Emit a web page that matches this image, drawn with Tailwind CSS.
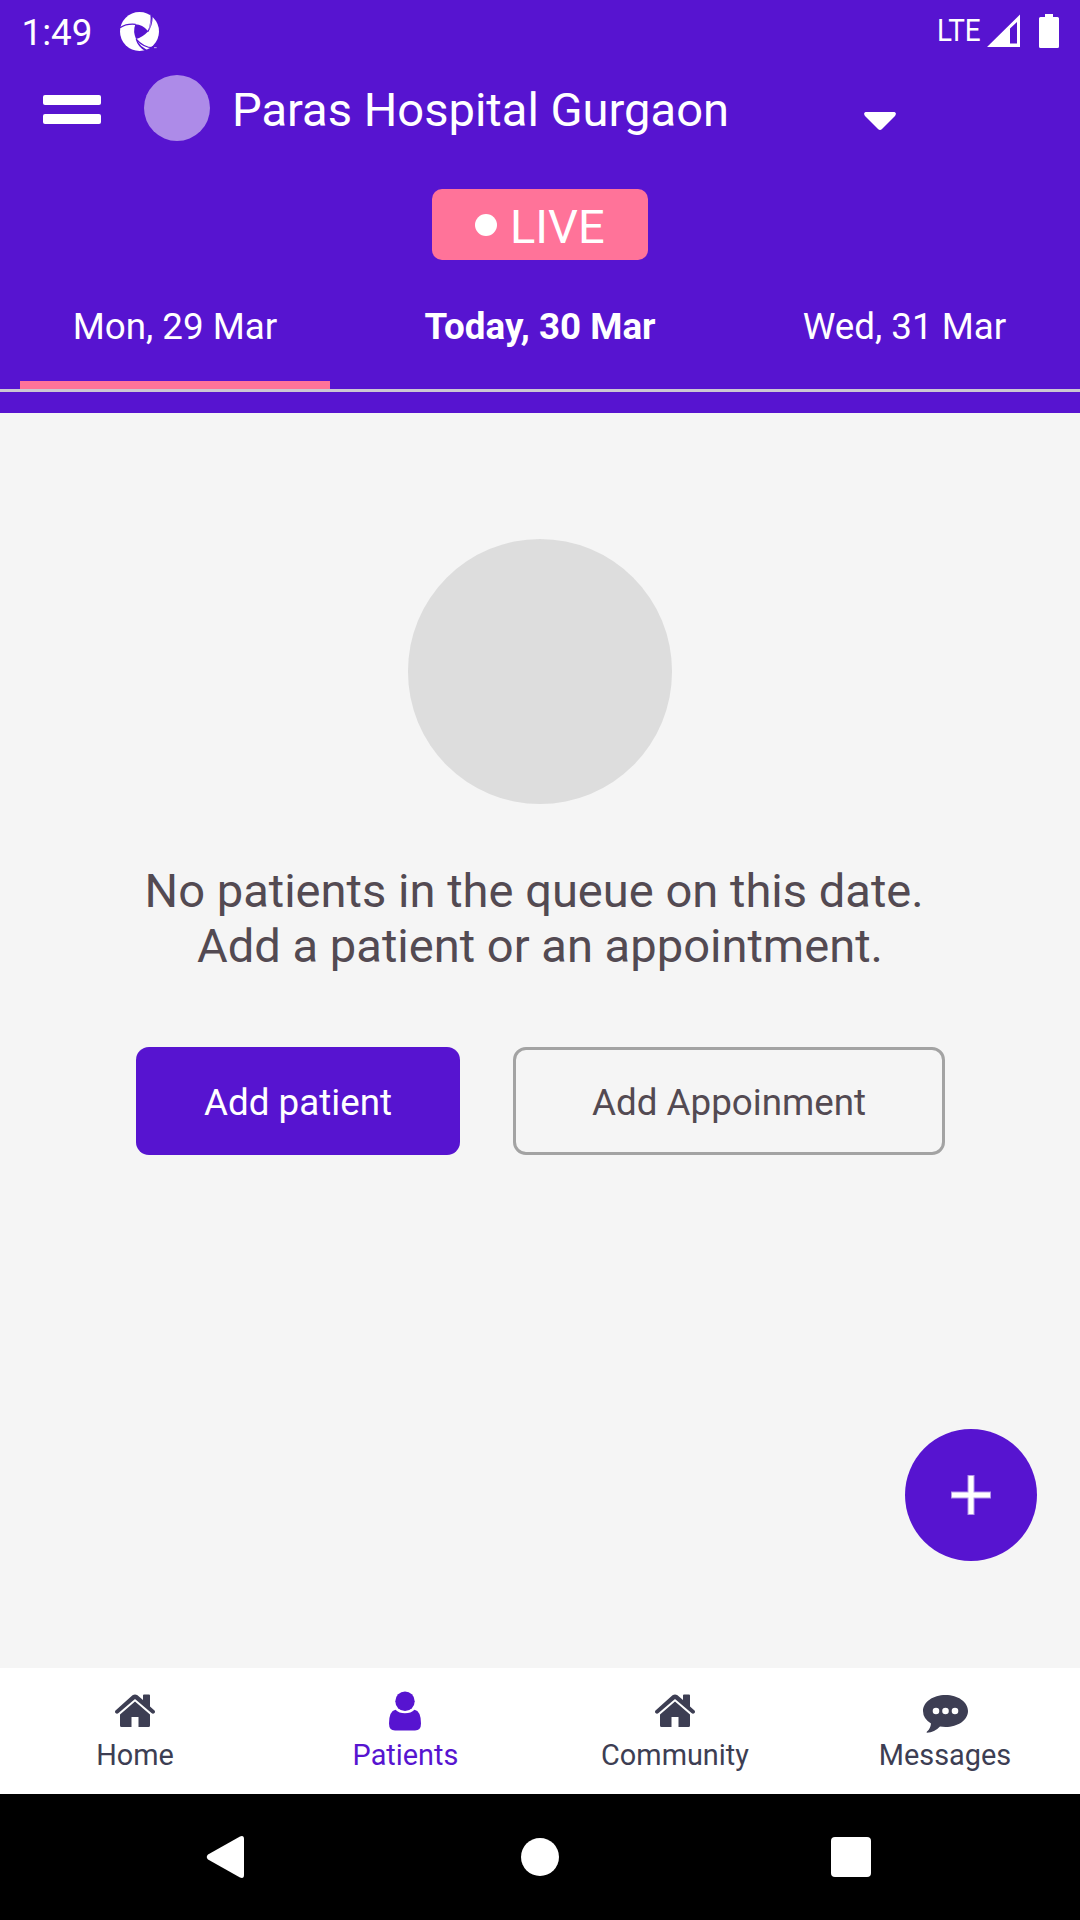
<!DOCTYPE html>
<html lang="en">
<head>
<meta charset="utf-8">
<title>Patients</title>
<script src="https://cdn.jsdelivr.net/npm/@tailwindcss/browser@4"></script>
</head>
<body class="bg-[#f5f5f5]">
<div class="relative flex h-[1920px] w-[1080px] flex-col overflow-hidden bg-[#f5f5f5] font-['Roboto',sans-serif] text-[36.75px] text-white">

  <header class="h-[413px] shrink-0 bg-[#5714d0]">
    <!-- Status bar -->
    <div class="flex h-[63px] justify-between pl-[21.5px] pr-[19px]">
      <div class="flex">
        <span class="w-[98.5px] leading-[66px]">1:49</span>
        <svg class="mt-3 h-[39px] w-[39px]" viewBox="0 0 117 117">
          <circle cx="58.500" cy="58.500" r="58.500" fill="#fff"/>
          <path d="M46 37Q38 59 48 81Q67 77 85 58Q67 37 46 37Z" fill="#5714d0"/>
          <path d="M0 47Q20 34 47 37" fill="none" stroke="#5714d0" stroke-width="3.500"/>
          <path d="M89 0L98 14Q98 38 85 60L83 58Q95 32 89 0Z" fill="#5714d0"/>
          <path d="M90 8Q96 28 89 50" fill="none" stroke="#fff" stroke-width="1.500"/>
          <path d="M47 82Q54 106 76 117H84L78 112Q62 104 52 88Q70 108 98 109L105 105Q74 108 50 80Z" fill="#5714d0"/>
          <path d="M102 107h8" stroke="#fff" stroke-width="2"/>
        </svg>
      </div>
      <div class="flex">
        <span class="w-[50px] origin-left scale-x-[.87] text-[32px] leading-[61px]">LTE</span>
        <svg class="mt-3.5 h-[34px] w-[74px]" viewBox="0 0 74 34" fill="#fff">
          <path fill-rule="evenodd" d="M0 33L33 .500V33ZM23 14.500V29.500H30V8Z"/>
          <path d="M58 0h8v3h4.500q1.500 0 1.500 1.500v28q0 1.500-1.500 1.500h-17q-1.500 0-1.500-1.500v-28q0-1.500 1.500-1.500H58Z"/>
        </svg>
      </div>
    </div>

    <!-- Clinic selector -->
    <div class="flex h-[90px] items-center pl-[43px]">
      <div class="mt-[3px] flex w-[101px] flex-col gap-[9px]">
        <div class="h-2.5 w-[58px] rounded-[2px] bg-white"></div>
        <div class="h-2.5 w-[58px] rounded-[2px] bg-white"></div>
      </div>
      <div class="h-[66px] w-[66px] rounded-full bg-[#ad8be8]"></div>
      <div class="ml-[22px] w-[632px] whitespace-nowrap pt-[3px] text-[47.1px] leading-[55px]">Paras Hospital Gurgaon</div>
      <svg class="mt-[26px] h-[18px] w-8" viewBox="0 0 32 18" fill="#fff"><path d="M1.500 0h29Q33 1 31 4L18 17Q16 19 14 17L1 4Q-1 1 1.500 0Z"/></svg>
    </div>

    <div class="mx-auto mt-9 flex h-[71px] w-[216px] items-center rounded-[10px] bg-[#ff7399] pl-[43px]">
      <div class="h-[22px] w-[22px] rounded-full bg-white"></div>
      <span class="ml-[13px] pt-1 text-[47px] leading-[55px]">LIVE</span>
    </div>

    <!-- Date tabs -->
    <div class="grid h-[132px] grid-cols-3 gap-[55px] border-b-3 border-[#ccc8d2] px-5 text-center leading-[125px]">
      <div class="h-[129px] border-b-8 border-[#ff7399] pt-1 whitespace-nowrap">Mon, 29 Mar</div>
      <div class="pt-1 font-bold whitespace-nowrap">Today, 30 Mar</div>
      <div class="pt-1 pr-px whitespace-nowrap">Wed, 31 Mar</div>
    </div>
  </header>

  <!-- Empty queue -->
  <main class="flex h-[1255px] shrink-0 flex-col items-center pt-[126px] text-[#534a52]">
    <div class="h-[265px] w-[264px] rounded-full bg-[#ddd]"></div>
    <p class="mt-[59px] text-center text-[47.1px] leading-[55px] whitespace-nowrap">No patients in the queue on this date.&nbsp;<br>Add a patient or an appointment.</p>
    <div class="mt-[74px] flex gap-[53px]">
      <button class="h-[108px] w-[324px] rounded-[13px] bg-[#5714d0] pt-1 pl-px text-white">Add patient</button>
      <button class="h-[108px] w-[432px] rounded-[13px] border-3 border-[#a3a3a3] pt-1 pl-px">Add Appoinment</button>
    </div>
  </main>

  <button class="absolute left-[905px] top-[1429px] flex h-[132px] w-[132px] items-center justify-center rounded-full bg-[#5714d0]">
    <svg class="h-10 w-10" viewBox="0 0 40 40" fill="none" stroke="#fff"><path stroke-opacity=".55" stroke-width="7" d="M0 20h40M20 0v40"/><path stroke-width="5" d="M1 20h38M20 1v38"/></svg>
  </button>

  <!-- Bottom navigation -->
  <nav class="grid h-[126px] shrink-0 grid-cols-4 bg-white pt-[22px] text-[28.875px] leading-[34px] text-[#3d3e53]">
    <div class="flex flex-col items-center gap-2">
      <svg class="h-10 w-10" viewBox="0 0 40 40" fill="currentColor"><path d="M17.500 5.200Q20 3.700 22.500 5.200L28 10V5.500Q28 4.500 29 4.500h5q1 0 1 1V16.500l4.500 4Q40.500 21.500 39.500 23q-1.500 1.500-3 0L20 9L3.500 23q-1.500 1.500-3 0Q-.500 21.500.500 20.500Z"/><path d="M20 11.500L35 24.500V35.500Q35 37 33.500 37H23.500V27h-7V37H6.500Q5 37 5 35.500V24.500Z"/></svg>
      <span>Home</span>
    </div>
    <div class="flex flex-col items-center gap-2 text-[#5714d0]">
      <svg class="h-10 w-10 overflow-visible" viewBox="0 0 40 40" fill="currentColor"><ellipse cx="20" cy="11.300" rx="9.700" ry="9.800"/><path d="M10.500 19.700Q14 23.200 20 23.200T29.500 19.700Q36 21 36 33.500Q36 40.500 30 40.500H10Q4 40.500 4 33.500Q4 21 10.500 19.700Z"/></svg>
      <span class="pl-px">Patients</span>
    </div>
    <div class="flex flex-col items-center gap-2">
      <svg class="h-10 w-10" viewBox="0 0 40 40" fill="currentColor"><path d="M17.500 5.200Q20 3.700 22.500 5.200L28 10V5.500Q28 4.500 29 4.500h5q1 0 1 1V16.500l4.500 4Q40.500 21.500 39.500 23q-1.500 1.500-3 0L20 9L3.500 23q-1.500 1.500-3 0Q-.500 21.500.500 20.500Z"/><path d="M20 11.500L35 24.500V35.500Q35 37 33.500 37H23.500V27h-7V37H6.500Q5 37 5 35.500V24.500Z"/></svg>
      <span>Community</span>
    </div>
    <div class="flex flex-col items-center gap-2">
      <svg class="h-10 w-[46px] overflow-visible" viewBox="0 0 46 40" fill="currentColor"><path fill-rule="evenodd" d="M23.500 5C36 5 46 12 46 21S36 37 23.500 37Q20.500 37 18 36.600Q12.500 42.500 5 42.800Q4 42.500 5 41.500Q8.500 38.500 9 33.500Q1 28.500 1 21C1 12 11 5 23.500 5ZM10.700 21a3.300 3.300 0 1 0 6.600 0a3.300 3.300 0 1 0-6.600 0M20.200 21a3.300 3.300 0 1 0 6.600 0a3.300 3.300 0 1 0-6.600 0M29.700 21a3.300 3.300 0 1 0 6.600 0a3.300 3.300 0 1 0-6.600 0"/></svg>
      <span>Messages</span>
    </div>
  </nav>

  <!-- System navigation -->
  <div class="flex h-[126px] shrink-0 items-center bg-black pl-[206px]">
    <svg class="h-[42px] w-[38px]" viewBox="0 0 38 42" fill="#fff"><path d="M34 .500Q38-1 38 3V39Q38 43 34 41.500L2 23.500Q-.500 21 2 18.500Z"/></svg>
    <div class="ml-[277px] h-[38px] w-[38px] rounded-full bg-white"></div>
    <div class="ml-[272px] h-10 w-10 rounded-[4px] bg-white"></div>
  </div>
</div>
</body>
</html>
